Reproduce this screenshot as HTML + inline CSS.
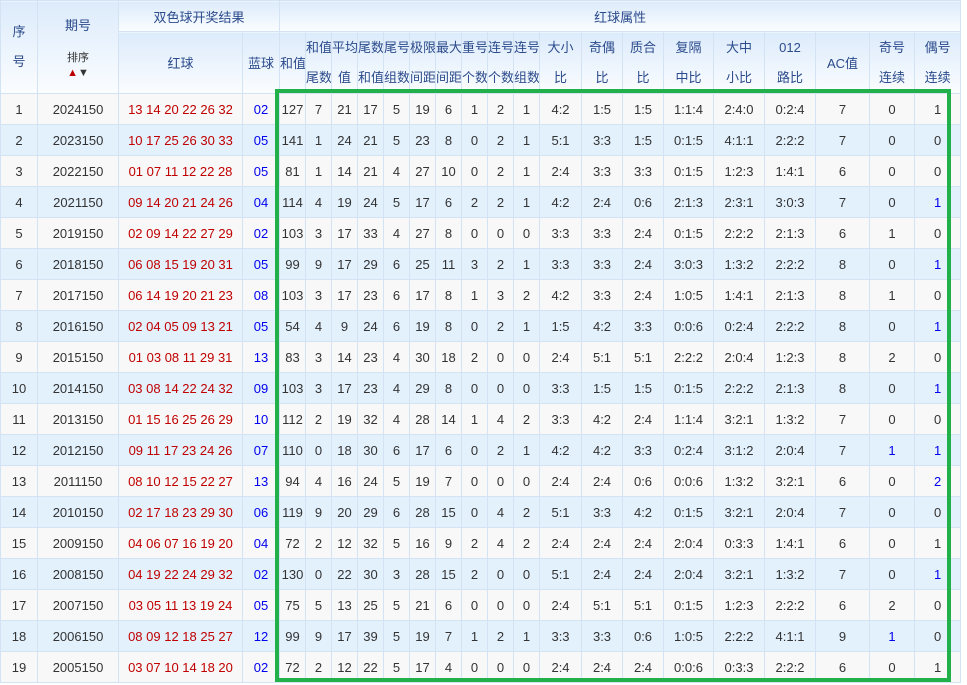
<!DOCTYPE html>
<html><head><meta charset="utf-8"><style>
html,body{margin:0;padding:0;background:#fff;width:967px;height:685px;overflow:hidden}
body{font-family:"Liberation Sans","Noto Sans CJK SC",sans-serif;position:relative}
table{border-collapse:collapse;table-layout:fixed;width:960px;font-size:13px;color:#333}
td,th{border:1px solid #d3e3f3;padding:0;text-align:center;font-weight:normal;overflow:hidden;white-space:nowrap}
thead th{background:linear-gradient(#dcebfb,#fbfdff);color:#2c4b8c;font-size:13px}
thead tr{height:31px}
.two{line-height:30px}
tbody tr{height:31px}
tbody tr:nth-child(odd) td{background:#f8f8f8}
tbody tr:nth-child(even) td{background:#e3f1fd}
tbody td.s{background:#e8f3fc}
.r{color:#c00000}
.b{color:#0000ee}
.box{position:absolute;left:275px;top:89px;width:676px;height:593px;border:4px solid #22b04b;box-sizing:border-box}
.sort{font-size:11px;color:#333;line-height:12px}
</style></head><body>
<table>
<colgroup><col style="width:37px"><col style="width:81px"><col style="width:124px"><col style="width:37px"><col style="width:26px"><col style="width:26px"><col style="width:26px"><col style="width:26px"><col style="width:26px"><col style="width:26px"><col style="width:26px"><col style="width:26px"><col style="width:26px"><col style="width:26px"><col style="width:42px"><col style="width:41px"><col style="width:41px"><col style="width:50px"><col style="width:51px"><col style="width:51px"><col style="width:54px"><col style="width:45px"><col style="width:46px"></colgroup>
<thead>
<tr><th rowspan="3" class="two">序<br>号</th><th rowspan="3">期号<br><br><span class="sort">排序<br><span style="color:#b00">▲</span>▼</span></th><th colspan="2">双色球开奖结果</th><th colspan="19">红球属性</th></tr>
<tr><th rowspan="2">红球</th><th rowspan="2">蓝球</th><th rowspan="2">和值</th><th rowspan="2" class="two">和值<br>尾数</th><th rowspan="2" class="two">平均<br>值</th><th rowspan="2" class="two">尾数<br>和值</th><th rowspan="2" class="two">尾号<br>组数</th><th rowspan="2" class="two">极限<br>间距</th><th rowspan="2" class="two">最大<br>间距</th><th rowspan="2" class="two">重号<br>个数</th><th rowspan="2" class="two">连号<br>个数</th><th rowspan="2" class="two">连号<br>组数</th><th rowspan="2" class="two">大小<br>比</th><th rowspan="2" class="two">奇偶<br>比</th><th rowspan="2" class="two">质合<br>比</th><th rowspan="2" class="two">复隔<br>中比</th><th rowspan="2" class="two">大中<br>小比</th><th rowspan="2" class="two">012<br>路比</th><th rowspan="2">AC值</th><th rowspan="2" class="two">奇号<br>连续</th><th rowspan="2" class="two">偶号<br>连续</th></tr>
<tr></tr>
</thead>
<tbody>
<tr><td>1</td><td>2024150</td><td class="r">13 14 20 22 26 32</td><td class="b">02</td><td>127</td><td>7</td><td>21</td><td>17</td><td>5</td><td>19</td><td>6</td><td>1</td><td>2</td><td>1</td><td>4:2</td><td>1:5</td><td>1:5</td><td>1:1:4</td><td>2:4:0</td><td>0:2:4</td><td>7</td><td>0</td><td>1</td></tr>
<tr><td>2</td><td>2023150</td><td class="r">10 17 25 26 30 33</td><td class="b">05</td><td>141</td><td>1</td><td>24</td><td>21</td><td>5</td><td>23</td><td>8</td><td>0</td><td>2</td><td>1</td><td>5:1</td><td>3:3</td><td>1:5</td><td>0:1:5</td><td>4:1:1</td><td>2:2:2</td><td>7</td><td>0</td><td>0</td></tr>
<tr><td>3</td><td>2022150</td><td class="r">01 07 11 12 22 28</td><td class="b">05</td><td>81</td><td>1</td><td>14</td><td>21</td><td>4</td><td>27</td><td>10</td><td>0</td><td>2</td><td>1</td><td>2:4</td><td>3:3</td><td>3:3</td><td>0:1:5</td><td>1:2:3</td><td>1:4:1</td><td>6</td><td>0</td><td>0</td></tr>
<tr><td>4</td><td>2021150</td><td class="r">09 14 20 21 24 26</td><td class="b">04</td><td>114</td><td>4</td><td>19</td><td>24</td><td>5</td><td>17</td><td>6</td><td>2</td><td>2</td><td>1</td><td>4:2</td><td>2:4</td><td>0:6</td><td>2:1:3</td><td>2:3:1</td><td>3:0:3</td><td>7</td><td>0</td><td class="b">1</td></tr>
<tr><td>5</td><td>2019150</td><td class="r">02 09 14 22 27 29</td><td class="b">02</td><td>103</td><td>3</td><td>17</td><td>33</td><td>4</td><td>27</td><td>8</td><td>0</td><td>0</td><td>0</td><td>3:3</td><td>3:3</td><td>2:4</td><td>0:1:5</td><td>2:2:2</td><td>2:1:3</td><td>6</td><td>1</td><td>0</td></tr>
<tr><td>6</td><td>2018150</td><td class="r">06 08 15 19 20 31</td><td class="b">05</td><td>99</td><td>9</td><td>17</td><td>29</td><td>6</td><td>25</td><td>11</td><td>3</td><td>2</td><td>1</td><td>3:3</td><td>3:3</td><td>2:4</td><td>3:0:3</td><td>1:3:2</td><td>2:2:2</td><td>8</td><td>0</td><td class="b">1</td></tr>
<tr><td>7</td><td>2017150</td><td class="r">06 14 19 20 21 23</td><td class="b">08</td><td>103</td><td>3</td><td>17</td><td>23</td><td>6</td><td>17</td><td>8</td><td>1</td><td>3</td><td>2</td><td>4:2</td><td>3:3</td><td>2:4</td><td>1:0:5</td><td>1:4:1</td><td>2:1:3</td><td>8</td><td>1</td><td>0</td></tr>
<tr><td>8</td><td>2016150</td><td class="r">02 04 05 09 13 21</td><td class="b">05</td><td>54</td><td>4</td><td>9</td><td>24</td><td>6</td><td>19</td><td>8</td><td>0</td><td>2</td><td>1</td><td>1:5</td><td>4:2</td><td>3:3</td><td>0:0:6</td><td>0:2:4</td><td>2:2:2</td><td>8</td><td>0</td><td class="b">1</td></tr>
<tr><td>9</td><td>2015150</td><td class="r">01 03 08 11 29 31</td><td class="b">13</td><td>83</td><td>3</td><td>14</td><td>23</td><td>4</td><td>30</td><td>18</td><td>2</td><td>0</td><td>0</td><td>2:4</td><td>5:1</td><td>5:1</td><td>2:2:2</td><td>2:0:4</td><td>1:2:3</td><td>8</td><td>2</td><td>0</td></tr>
<tr><td>10</td><td>2014150</td><td class="r">03 08 14 22 24 32</td><td class="b">09</td><td>103</td><td>3</td><td>17</td><td>23</td><td>4</td><td>29</td><td>8</td><td>0</td><td>0</td><td>0</td><td>3:3</td><td>1:5</td><td>1:5</td><td>0:1:5</td><td>2:2:2</td><td>2:1:3</td><td>8</td><td>0</td><td class="b">1</td></tr>
<tr><td>11</td><td>2013150</td><td class="r">01 15 16 25 26 29</td><td class="b">10</td><td>112</td><td>2</td><td>19</td><td>32</td><td>4</td><td>28</td><td>14</td><td>1</td><td>4</td><td>2</td><td>3:3</td><td>4:2</td><td>2:4</td><td>1:1:4</td><td>3:2:1</td><td>1:3:2</td><td>7</td><td>0</td><td>0</td></tr>
<tr><td>12</td><td>2012150</td><td class="r">09 11 17 23 24 26</td><td class="b">07</td><td>110</td><td>0</td><td>18</td><td>30</td><td>6</td><td>17</td><td>6</td><td>0</td><td>2</td><td>1</td><td>4:2</td><td>4:2</td><td>3:3</td><td>0:2:4</td><td>3:1:2</td><td>2:0:4</td><td>7</td><td class="b">1</td><td class="b">1</td></tr>
<tr><td>13</td><td>2011150</td><td class="r">08 10 12 15 22 27</td><td class="b">13</td><td>94</td><td>4</td><td>16</td><td>24</td><td>5</td><td>19</td><td>7</td><td>0</td><td>0</td><td>0</td><td>2:4</td><td>2:4</td><td>0:6</td><td>0:0:6</td><td>1:3:2</td><td>3:2:1</td><td>6</td><td>0</td><td class="b">2</td></tr>
<tr><td>14</td><td>2010150</td><td class="r">02 17 18 23 29 30</td><td class="b">06</td><td>119</td><td>9</td><td>20</td><td>29</td><td>6</td><td>28</td><td>15</td><td>0</td><td>4</td><td>2</td><td>5:1</td><td>3:3</td><td>4:2</td><td>0:1:5</td><td>3:2:1</td><td>2:0:4</td><td>7</td><td>0</td><td>0</td></tr>
<tr><td>15</td><td>2009150</td><td class="r">04 06 07 16 19 20</td><td class="b">04</td><td>72</td><td>2</td><td>12</td><td>32</td><td>5</td><td>16</td><td>9</td><td>2</td><td>4</td><td>2</td><td>2:4</td><td>2:4</td><td>2:4</td><td>2:0:4</td><td>0:3:3</td><td>1:4:1</td><td>6</td><td>0</td><td>1</td></tr>
<tr><td>16</td><td>2008150</td><td class="r">04 19 22 24 29 32</td><td class="b">02</td><td>130</td><td>0</td><td>22</td><td>30</td><td>3</td><td>28</td><td>15</td><td>2</td><td>0</td><td>0</td><td>5:1</td><td>2:4</td><td>2:4</td><td>2:0:4</td><td>3:2:1</td><td>1:3:2</td><td>7</td><td>0</td><td class="b">1</td></tr>
<tr><td>17</td><td>2007150</td><td class="r">03 05 11 13 19 24</td><td class="b">05</td><td>75</td><td>5</td><td>13</td><td>25</td><td>5</td><td>21</td><td>6</td><td>0</td><td>0</td><td>0</td><td>2:4</td><td>5:1</td><td>5:1</td><td>0:1:5</td><td>1:2:3</td><td>2:2:2</td><td>6</td><td>2</td><td>0</td></tr>
<tr><td>18</td><td>2006150</td><td class="r">08 09 12 18 25 27</td><td class="b">12</td><td>99</td><td>9</td><td>17</td><td>39</td><td>5</td><td>19</td><td>7</td><td>1</td><td>2</td><td>1</td><td>3:3</td><td>3:3</td><td>0:6</td><td>1:0:5</td><td>2:2:2</td><td>4:1:1</td><td>9</td><td class="b">1</td><td>0</td></tr>
<tr><td>19</td><td>2005150</td><td class="r">03 07 10 14 18 20</td><td class="b">02</td><td>72</td><td>2</td><td>12</td><td>22</td><td>5</td><td>17</td><td>4</td><td>0</td><td>0</td><td>0</td><td>2:4</td><td>2:4</td><td>2:4</td><td>0:0:6</td><td>0:3:3</td><td>2:2:2</td><td>6</td><td>0</td><td>1</td></tr>
</tbody>
</table>
<div class="box"></div>
</body></html>
